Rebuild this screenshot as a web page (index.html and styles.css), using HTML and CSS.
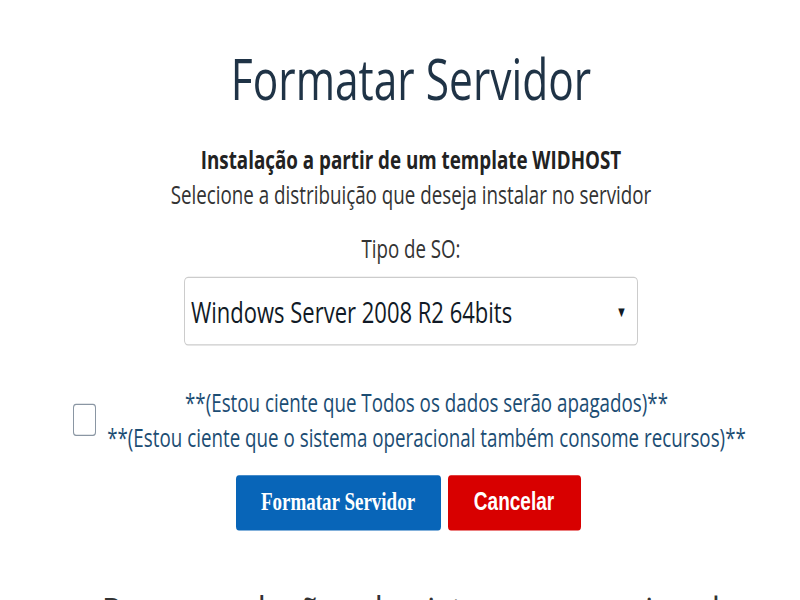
FILE: index.html
```html
<!DOCTYPE html>
<html lang="pt">
<head>
<meta charset="utf-8">
<link rel="stylesheet" href="styles.css">
</head>
<body>
<div class="page">
  <h1 class="title">Formatar Servidor</h1>
  <p class="lead">Instalação a partir de um template WIDHOST</p>
  <p class="sub">Selecione a distribuição que deseja instalar no servidor</p>
  <label class="so-label">Tipo de SO:</label>
  <div class="select">
    <span class="select-text">Windows Server 2008 R2 64bits</span>
    <span class="caret">▼</span>
  </div>
  <div class="confirm">
    <span class="box"></span>
    <div class="confirm-text">
      <div>**(Estou ciente que Todos os dados serão apagados)**</div>
      <div>**(Estou ciente que o sistema operacional também consome recursos)**</div>
    </div>
  </div>
  <div class="buttons">
    <button class="btn btn-blue">Formatar Servidor</button>
    <button class="btn btn-red">Cancelar</button>
  </div>
  <h2 class="next">Recomendações do sistema operacional</h2>
</div>
</body>
</html>
```
FILE: styles.css
```css
html {
  overflow: hidden;
  background: #fff;
}
body {
  margin: 0;
  padding: 0;
  height: 600px;
}
.page {
  width: 800px;
  transform: scaleY(1.35);
  transform-origin: top center;
  display: flex;
  flex-direction: column;
  align-items: center;
  font-family: "Open Sans", "Liberation Sans", sans-serif;
  color: #333;
  padding-left: 22px;
  box-sizing: border-box;
}
.title {
  margin: 28px 0 0;
  font-size: 42.5px;
  font-weight: 400;
  color: #1f3346;
  line-height: 60px;
}
.lead {
  margin: 16.5px 0 0;
  font-size: 18.8px;
  font-weight: 700;
  color: #222;
  line-height: 26.5px;
}
.sub {
  margin: 0;
  font-size: 18.8px;
  color: #333;
  line-height: 26.5px;
}
.so-label {
  margin-top: 13px;
  font-size: 18.7px;
  line-height: 26.5px;
  color: #333;
}
.select {
  margin-top: 7.5px;
  width: 454px;
  height: 51px;
  box-sizing: border-box;
  border: 1px solid #ccc;
  border-radius: 4px;
  display: flex;
  align-items: center;
  justify-content: space-between;
  padding: 0 10px 0 6px;
}
.select-text {
  font-size: 22px;
  color: #111a26;
}
.caret {
  font-size: 11px;
  color: #111a26;
}
.confirm {
  margin-top: 29.5px;
  display: flex;
  align-items: center;
  gap: 11px;
  margin-left: -3px;
}
.box {
  width: 23px;
  height: 23.5px;
  box-sizing: border-box;
  border: 1px solid #8a96a3;
  border-radius: 3px;
}
.confirm-text {
  text-align: center;
  font-size: 18.8px;
  line-height: 26px;
  color: #1c4d73;
}
.buttons {
  margin-top: 15px;
  margin-left: -6px;
  display: flex;
  gap: 7px;
}
.btn {
  height: 40.7px;
  border: none;
  border-radius: 3px;
  color: #fff;
  font-weight: 700;
  padding: 0;
}
.btn-blue {
  width: 205px;
  background: #0865b8;
  font-family: "Liberation Serif", serif;
  font-size: 19px;
}
.btn-red {
  width: 133px;
  background: #d80000;
  font-family: "Liberation Sans", sans-serif;
  font-size: 19px;
}
.next {
  margin: 41px 0 0;
  font-size: 33px;
  line-height: 40px;
  font-weight: 400;
  color: #333;
  white-space: nowrap;
}
```
